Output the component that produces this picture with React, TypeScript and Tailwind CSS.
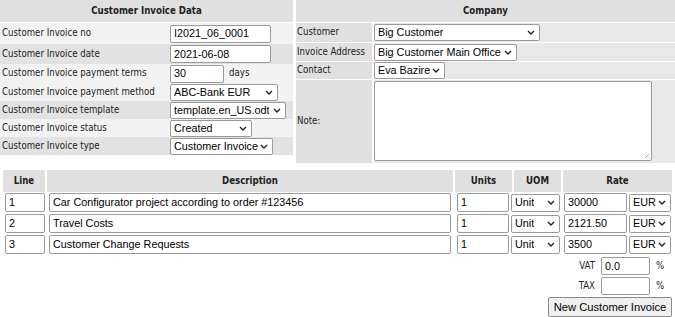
import React from "react"

const label = "font-['DejaVu_Sans_Condensed','DejaVu_Sans',Verdana,sans-serif] text-[9.6px] text-[#222]"
const field = "font-['Liberation_Sans',Arial,sans-serif] text-[10.8px] text-black"

function Chevron() {
  return (
    <svg width="8" height="5" viewBox="0 0 8 5" className="shrink-0">
      <path d="M1 1l3 3 3-3" fill="none" stroke="#222" strokeWidth="1.4" />
    </svg>
  )
}

function TextBox({ value = "", w, h = "h-[18px]" }: { value?: string; w: string; h?: string }) {
  return (
    <div className={`${w} ${h} ${field} flex items-center bg-white border border-[#9a9a9a] rounded-[2px] pl-[3px] whitespace-nowrap overflow-hidden`}>
      {value}
    </div>
  )
}

function SelectBox({ value, w, h = "h-[17px]" }: { value: string; w: string; h?: string }) {
  return (
    <div className={`${w} ${h} ${field} flex items-center justify-between gap-[2px] bg-white border border-[#9a9a9a] rounded-[2px] pl-[3px] pr-[4px]`}>
      <span className="whitespace-nowrap overflow-hidden">{value}</span>
      <Chevron />
    </div>
  )
}

const leftRows: { label: string; h: string; bg: string; control: React.ReactNode }[] = [
  { label: "Customer Invoice no", h: "h-[21px]", bg: "bg-[#f2f2f2]", control: <TextBox value="I2021_06_0001" w="w-[101px]" /> },
  { label: "Customer Invoice date", h: "h-[20px]", bg: "bg-[#e2e2e2]", control: <TextBox value="2021-06-08" w="w-[101px]" /> },
  {
    label: "Customer Invoice payment terms",
    h: "h-[19px]",
    bg: "bg-[#f2f2f2]",
    control: (
      <div className="flex items-center gap-[5px]">
        <TextBox value="30" w="w-[54px]" />
        <span className={label}>days</span>
      </div>
    ),
  },
  { label: "Customer Invoice payment method", h: "h-[18px]", bg: "bg-[#f2f2f2]", control: <SelectBox value="ABC-Bank EUR" w="w-[108px]" /> },
  { label: "Customer Invoice template", h: "h-[18px]", bg: "bg-[#e2e2e2]", control: <SelectBox value="template.en_US.odt" w="w-[116px]" /> },
  { label: "Customer Invoice status", h: "h-[18px]", bg: "bg-[#f2f2f2]", control: <SelectBox value="Created" w="w-[82px]" /> },
  { label: "Customer Invoice type", h: "h-[18px]", bg: "bg-[#e2e2e2]", control: <SelectBox value="Customer Invoice" w="w-[103px]" /> },
]

const lines = [
  { n: "1", desc: "Car Configurator project according to order #123456", rate: "30000" },
  { n: "2", desc: "Travel Costs", rate: "2121.50" },
  { n: "3", desc: "Customer Change Requests", rate: "3500" },
]

export default function App() {
  return (
    <div className="w-[675px] h-[317px] bg-white overflow-hidden">
      {/* Top: invoice data + company */}
      <div className="flex gap-[3px]">
        <div className="w-[293px] flex flex-col">
          <div className={`${label} font-bold h-[22px] mb-px bg-[#e0e0e0] flex items-center justify-center`}>
            Customer Invoice Data
          </div>
          {leftRows.map((r) => (
            <div key={r.label} className={`${r.h} ${r.bg} flex items-center`}>
              <div className={`${label} w-[170px] pl-[2px] whitespace-nowrap`}>{r.label}</div>
              <div className="flex-1">{r.control}</div>
            </div>
          ))}
        </div>

        <div className="flex-1 flex flex-col gap-px">
          <div className={`${label} font-bold h-[22px] bg-[#e0e0e0] flex items-center justify-center`}>Company</div>
          <div className="flex gap-[2px] h-[19px]">
            <div className={`${label} w-[76px] bg-[#e0e0e0] pl-[1px] flex items-center`}>Customer</div>
            <div className="flex-1 bg-[#e8e8e8] flex items-center">
              <SelectBox value="Big Customer" w="w-[166px]" />
            </div>
          </div>
          <div className="flex gap-[2px] h-[18px]">
            <div className={`${label} w-[76px] bg-[#e0e0e0] pl-[1px] flex items-center whitespace-nowrap`}>Invoice Address</div>
            <div className="flex-1 bg-[#e8e8e8] flex items-center">
              <SelectBox value="Big Customer Main Office" w="w-[143px]" />
            </div>
          </div>
          <div className="flex gap-[2px] h-[17px]">
            <div className={`${label} w-[76px] bg-[#e0e0e0] pl-[1px] flex items-center`}>Contact</div>
            <div className="flex-1 bg-[#e8e8e8] flex items-center">
              <SelectBox value="Eva Bazire" w="w-[71px]" />
            </div>
          </div>
          <div className="flex gap-[2px] h-[83px]">
            <div className={`${label} w-[76px] bg-[#e0e0e0] pl-[1px] flex items-center`}>Note:</div>
            <div className="flex-1 bg-[#e8e8e8] flex items-start pt-[1px]">
              <div className="relative w-[278px] h-[80px] bg-white border border-[#9a9a9a] rounded-[2px]">
                <svg width="6" height="6" viewBox="0 0 6 6" className="absolute right-[1px] bottom-[1px]">
                  <path d="M5 1L1 5M5 3.5L3.5 5" stroke="#999" strokeWidth="0.8" />
                </svg>
              </div>
            </div>
          </div>
        </div>
      </div>

      {/* Line items */}
      <div className="mt-[7px] px-[3px] flex flex-col">
        <div className={`${label} font-bold h-[22px] flex gap-[2px]`}>
          <div className="w-[42px] bg-[#e0e0e0] flex items-center justify-center">Line</div>
          <div className="w-[406px] bg-[#e0e0e0] flex items-center justify-center">Description</div>
          <div className="w-[57px] bg-[#e0e0e0] flex items-center justify-center">Units</div>
          <div className="w-[47px] bg-[#e0e0e0] flex items-center justify-center">UOM</div>
          <div className="flex-1 bg-[#e0e0e0] flex items-center justify-center">Rate</div>
        </div>
        <div className="flex flex-col gap-[2px] mt-px">
          {lines.map((l) => (
            <div key={l.n} className="flex items-center h-[19px]">
              <div className="ml-[2px]">
                <TextBox value={l.n} w="w-[40px]" h="h-[19px]" />
              </div>
              <div className="ml-[4px]">
                <TextBox value={l.desc} w="w-[402px]" h="h-[19px]" />
              </div>
              <div className="ml-[6px]">
                <TextBox value="1" w="w-[52px]" h="h-[19px]" />
              </div>
              <div className="ml-[2px]">
                <SelectBox value="Unit" w="w-[49px]" h="h-[18px]" />
              </div>
              <div className="ml-[4px]">
                <TextBox value={l.rate} w="w-[63px]" h="h-[19px]" />
              </div>
              <div className="ml-[2px]">
                <SelectBox value="EUR" w="w-[42px]" h="h-[18px]" />
              </div>
            </div>
          ))}
        </div>

        <div className="flex flex-col items-end pr-[8px] mt-[3px] gap-[2px]">
          <div className="flex items-center h-[18px]">
            <span className={`${label} mr-[6px]`}>VAT</span>
            <TextBox value="0.0" w="w-[49px]" />
            <span className={`${label} ml-[6px] w-[8px]`}>%</span>
          </div>
          <div className="flex items-center h-[18px]">
            <span className={`${label} mr-[6px]`}>TAX</span>
            <TextBox w="w-[49px]" />
            <span className={`${label} ml-[6px] w-[8px]`}>%</span>
          </div>
        </div>
        <div className="flex justify-end mt-[2px]">
          <div className="font-['Liberation_Sans',Arial,sans-serif] text-[11.2px] text-black h-[20px] w-[124px] flex items-center justify-center bg-[#efefef] border border-[#8a8a8a] rounded-[2px]">
            New Customer Invoice
          </div>
        </div>
      </div>
    </div>
  )
}
